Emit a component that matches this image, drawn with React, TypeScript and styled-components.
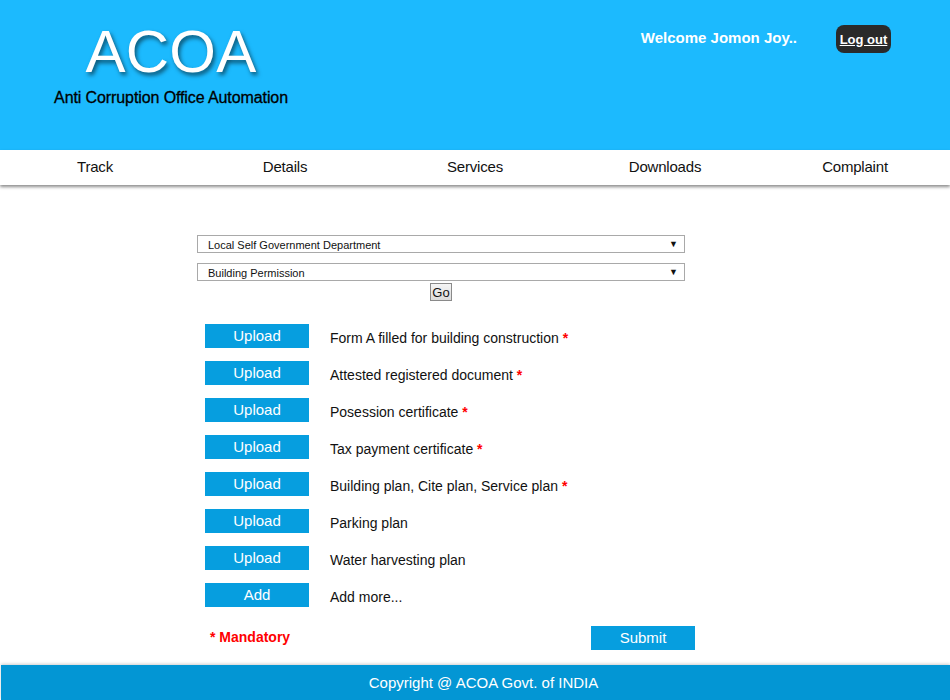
import React from "react";
import styled, { createGlobalStyle } from "styled-components";

const Global = createGlobalStyle`
  html, body { margin: 0; padding: 0; background: #fff; }
  body { font-family: "Liberation Sans", Arial, sans-serif; width: 950px; height: 700px; overflow: hidden; }
`;

const Page = styled.div`
  width: 950px;
  height: 700px;
  display: flex;
  flex-direction: column;
`;

const Header = styled.header`
  height: 150px;
  background: #1cbafe;
  display: flex;
  justify-content: space-between;
  align-items: flex-start;
`;

const Brand = styled.div`
  width: 342px;
  display: flex;
  flex-direction: column;
  align-items: center;
  padding-top: 19px;
`;

const Logo = styled.h1`
  margin: 0;
  font-size: 60px;
  font-weight: 400;
  line-height: 66px;
  color: #fff;
  text-shadow: 2px 3px 4px rgba(0, 0, 0, 0.55);
  letter-spacing: 0.3px;
`;

const Tagline = styled.div`
  margin-top: 4px;
  font-size: 16px;
  font-weight: 400;
  color: #000;
  letter-spacing: -0.1px;
  -webkit-text-stroke: 0.3px #000;
`;

const UserBox = styled.div`
  display: flex;
  align-items: center;
  padding-top: 25px;
  padding-right: 59px;
  gap: 39px;
`;

const Welcome = styled.span`
  font-size: 15px;
  font-weight: 700;
  color: #fff;
  margin-top: -3px;
`;

const Logout = styled.a`
  background: #2a2a2a;
  color: #fff;
  font-size: 13px;
  font-weight: 700;
  text-decoration: underline;
  border-radius: 8px;
  height: 28px;
  width: 55px;
  display: flex;
  align-items: center;
  justify-content: center;
`;

const Nav = styled.nav`
  height: 35px;
  background: #fff;
  display: grid;
  grid-template-columns: repeat(5, 190px);
  align-items: center;
  box-shadow: 0 2px 3px rgba(0, 0, 0, 0.45);
  position: relative;
  z-index: 1;
`;

const NavItem = styled.a`
  text-align: center;
  font-size: 15px;
  color: #111;
  letter-spacing: -0.2px;
  margin-top: -2px;
`;

const Main = styled.main`
  flex: 1;
  display: flex;
  flex-direction: column;
  padding: 50px 0 0 197px;
`;

const Form = styled.div`
  width: 498px;
  display: flex;
  flex-direction: column;
`;

const Select = styled.div`
  width: 486px;
  height: 16px;
  border: 1px solid #a9a9a9;
  display: flex;
  align-items: center;
  justify-content: space-between;
  font-size: 11px;
  color: #111;
  margin-bottom: 10px;
  & + & { margin-bottom: 2px; }
`;

const SelectText = styled.span`
  padding-left: 10px;
  padding-top: 2px;
`;

const Arrow = styled.span`
  font-size: 9px;
  padding-right: 6px;
`;

const GoRow = styled.div`
  width: 488px;
  display: flex;
  justify-content: center;
  margin-bottom: 23px;
`;

const GoButton = styled.button`
  font-family: "Liberation Sans", Arial, sans-serif;
  font-size: 13px;
  height: 18px;
  width: 22px;
  padding: 0;
  border: 1px solid #8a8a8a;
  background: linear-gradient(#f4f4f4, #dcdcdc);
  color: #111;
`;

const Rows = styled.div`
  display: flex;
  flex-direction: column;
  gap: 13px;
  padding-left: 8px;
`;

const Row = styled.div`
  display: flex;
  align-items: center;
  height: 24px;
`;

const BlueButton = styled.button`
  width: 104px;
  height: 24px;
  background: #069edf;
  color: #fff;
  border: none;
  font-family: "Liberation Sans", Arial, sans-serif;
  font-size: 15px;
  padding: 0 0 2px 0;
  flex-shrink: 0;
`;

const Label = styled.span`
  margin-left: 21px;
  font-size: 14px;
  color: #111;
  padding-top: 3px;
`;

const Star = styled.span`
  color: #f00;
  font-weight: 700;
`;

const Bottom = styled.div`
  display: flex;
  justify-content: space-between;
  align-items: center;
  margin-top: 19px;
  padding-left: 13px;
`;

const Mandatory = styled.span`
  color: #f00;
  font-size: 14px;
  font-weight: 700;
  margin-top: -3px;
`;

const Footer = styled.footer`
  height: 35px;
  background: #0396d4;
  color: #fff;
  font-size: 15px;
  display: flex;
  align-items: center;
  justify-content: center;
  padding-left: 16px;
  box-shadow: 0 -1px 3px rgba(0, 0, 0, 0.2);
  margin-left: 1px;
`;

const docs: { label: string; required: boolean }[] = [
  { label: "Form A filled for building construction", required: true },
  { label: "Attested registered document", required: true },
  { label: "Posession certificate", required: true },
  { label: "Tax payment certificate", required: true },
  { label: "Building plan, Cite plan, Service plan", required: true },
  { label: "Parking plan", required: false },
  { label: "Water harvesting plan", required: false },
];

export default function App() {
  return (
    <Page>
      <Global />
      <Header>
        <Brand>
          <Logo>ACOA</Logo>
          <Tagline>Anti Corruption Office Automation</Tagline>
        </Brand>
        <UserBox>
          <Welcome>Welcome Jomon Joy..</Welcome>
          <Logout>Log out</Logout>
        </UserBox>
      </Header>
      <Nav>
        {["Track", "Details", "Services", "Downloads", "Complaint"].map((n) => (
          <NavItem key={n}>{n}</NavItem>
        ))}
      </Nav>
      <Main>
        <Form>
          <Select>
            <SelectText>Local Self Government Department</SelectText>
            <Arrow>▼</Arrow>
          </Select>
          <Select>
            <SelectText>Building Permission</SelectText>
            <Arrow>▼</Arrow>
          </Select>
          <GoRow>
            <GoButton>Go</GoButton>
          </GoRow>
          <Rows>
            {docs.map((d) => (
              <Row key={d.label}>
                <BlueButton>Upload</BlueButton>
                <Label>
                  {d.label}
                  {d.required && <Star> *</Star>}
                </Label>
              </Row>
            ))}
            <Row>
              <BlueButton>Add</BlueButton>
              <Label>Add more...</Label>
            </Row>
          </Rows>
          <Bottom>
            <Mandatory>* Mandatory</Mandatory>
            <BlueButton>Submit</BlueButton>
          </Bottom>
        </Form>
      </Main>
      <Footer>Copyright @ ACOA Govt. of INDIA</Footer>
    </Page>
  );
}
